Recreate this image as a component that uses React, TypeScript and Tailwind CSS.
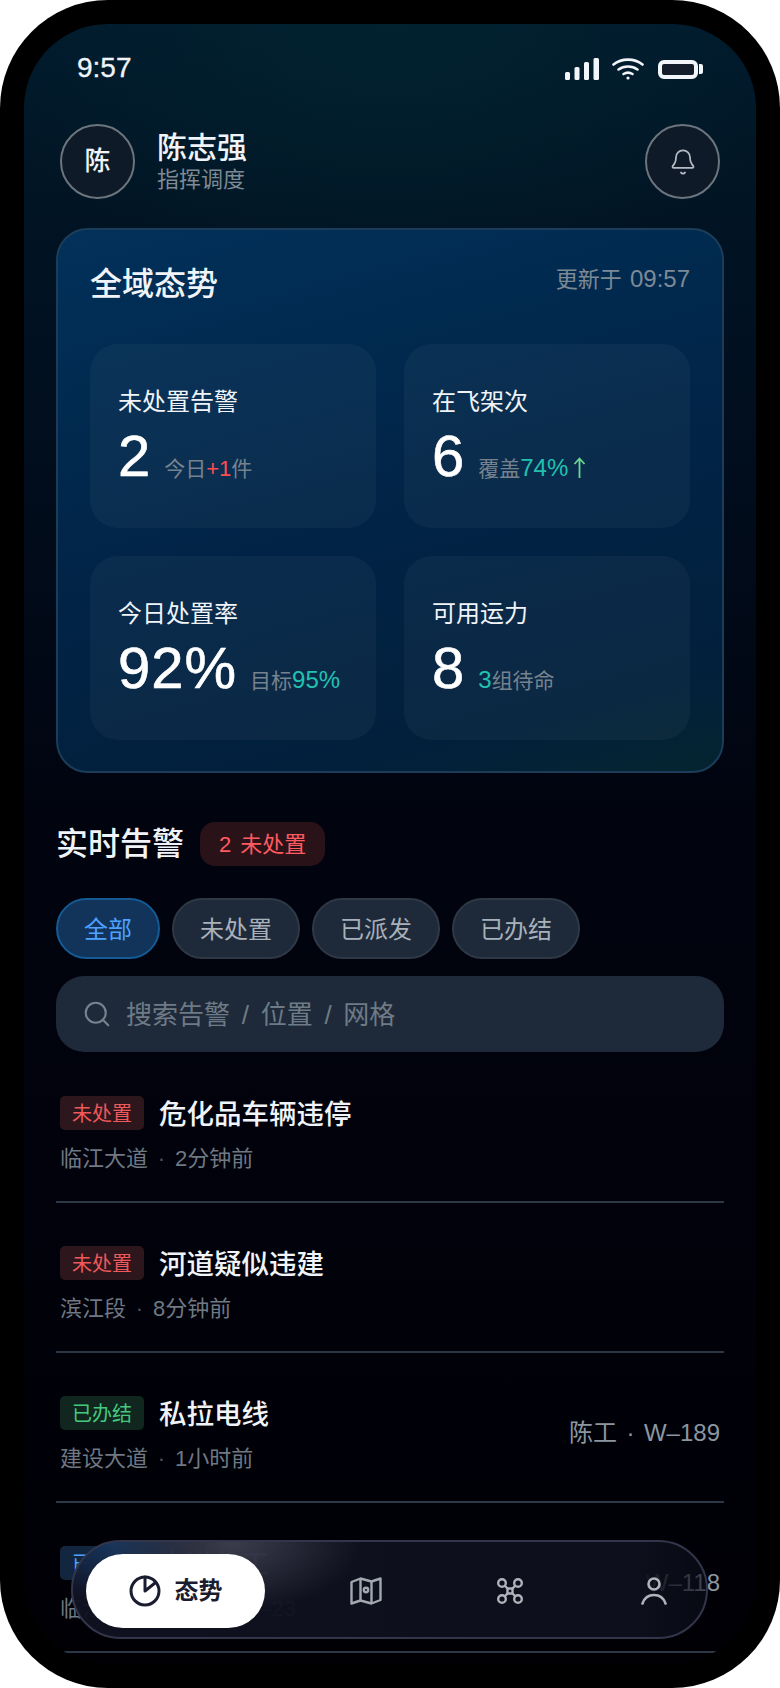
import { Bell, Search } from 'lucide-react';

const stats = [
  { label: '未处置告警', value: '2', sub: <>今日<b className="text-[22px] font-medium text-[#ff4d4f]">+1</b>件</> },
  {
    label: '在飞架次',
    value: '6',
    sub: (
      <>
        覆盖<b className="text-[24px] font-medium text-[#22c1b0]">74%</b>
        <svg className="ml-[5px] inline-block align-[-2px]" width="13" height="21" viewBox="0 0 13 21" fill="none" stroke="#6ad88f" strokeWidth="1.8">
          <path d="M6.5 21V1.5M1.5 7L6.5 1.5L11.5 7" />
        </svg>
      </>
    ),
  },
  { label: '今日处置率', value: '92%', sub: <>目标<b className="text-[24px] font-medium text-[#22c1b0]">95%</b></> },
  { label: '可用运力', value: '8', sub: <><b className="text-[24px] font-medium text-[#22c1b0]">3</b>组待命</> },
];

const filters = ['全部', '未处置', '已派发', '已办结'];

const alerts = [
  { tag: '未处置', tagClass: 'bg-[#2d171d] text-[#f0585a]', title: '危化品车辆违停', sub: '临江大道', time: '2分钟前', right: '' },
  { tag: '未处置', tagClass: 'bg-[#2d171d] text-[#f0585a]', title: '河道疑似违建', sub: '滨江段', time: '8分钟前', right: '' },
  { tag: '已办结', tagClass: 'bg-[#10261f] text-[#45c97f]', title: '私拉电线', sub: '建设大道', time: '1小时前', right: '陈工|W–189' },
  { tag: '已派发', tagClass: 'bg-[#12263f] text-[#4ea1ff]', title: '占道施工', sub: '临江北路', time: '网格 · W–23', right: '李工|W–118' },
];

function StatusIcons() {
  return (
    <div className="flex items-center">
      <svg width="34" height="22" viewBox="0 0 34 22" fill="#f2f5f9">
        <rect x="0" y="14" width="5" height="8" rx="1.5" />
        <rect x="9.5" y="9" width="5" height="13" rx="1.5" />
        <rect x="19" y="4" width="5" height="18" rx="1.5" />
        <rect x="28.5" y="0" width="5.5" height="22" rx="1.5" />
      </svg>
      <svg className="ml-[13px]" width="32" height="22" viewBox="0 0 32 22" fill="none" stroke="#f2f5f9" strokeWidth="2.6" strokeLinecap="round">
        <path d="M1.5 6.5C9.5 0 22.5 0 30.5 6.5" />
        <path d="M6.5 11.5C12 7.5 20 7.5 25.5 11.5" />
        <path d="M11.5 16C14.5 14.2 17.5 14.2 20.5 16" />
        <circle cx="16" cy="20" r="1.6" fill="#f2f5f9" stroke="none" />
      </svg>
      <div className="ml-[14px] h-[19px] w-[40px] rounded-[6px] border-[4px] border-[#f2f5f9] bg-[#141d2b]" />
      <div className="ml-[1px] h-[10px] w-[4px] rounded-r-[2px] bg-[#f2f5f9]" />
    </div>
  );
}

function PieIcon() {
  return (
    <svg width="32" height="32" viewBox="0 0 32 32" fill="none" stroke="#1a1c30" strokeWidth="3" strokeLinecap="round" strokeLinejoin="round">
      <circle cx="16" cy="16" r="14" />
      <path d="M16 2V16L26 8" />
    </svg>
  );
}

function MapIcon() {
  return (
    <svg width="32" height="28" viewBox="0 0 32 28" fill="none" stroke="#a3a7ae" strokeWidth="2.4" strokeLinejoin="round">
      <path d="M1.5 5L10.5 1.5L21.5 4.5L30.5 1.5V23L21.5 26.5L10.5 23.5L1.5 26.5Z" />
      <path d="M10.5 1.5V23.5M21.5 4.5V26.5" />
      <circle cx="16" cy="13" r="2.2" />
    </svg>
  );
}

function DroneIcon() {
  return (
    <svg width="26" height="26" viewBox="0 0 26 26" fill="none" stroke="#b0b3b9" strokeWidth="2.4">
      <circle cx="5" cy="5" r="3.8" />
      <circle cx="21" cy="5" r="3.8" />
      <circle cx="5" cy="21" r="3.8" />
      <circle cx="21" cy="21" r="3.8" />
      <path d="M8 8L10.5 10.5M18 8L15.5 10.5M8 18L10.5 15.5M18 18L15.5 15.5" />
      <rect x="10.5" y="10.5" width="5" height="5" rx="0.6" />
    </svg>
  );
}

function PersonIcon() {
  return (
    <svg width="26" height="28" viewBox="0 0 26 28" fill="none" stroke="#b0b3b9" strokeWidth="2.6" strokeLinecap="round">
      <circle cx="13" cy="7" r="5.5" />
      <path d="M1.5 26.5C3.5 20.5 8 18 13 18C18 18 22.5 20.5 24.5 26.5" />
    </svg>
  );
}

export default function App() {
  return (
    <div className="h-[1688px] w-[780px] rounded-[108px] bg-black p-[24px] font-['Liberation_Sans','Noto_Sans_CJK_SC',sans-serif]">
      <div className="relative h-full overflow-hidden rounded-[84px] bg-[radial-gradient(ellipse_60%_260px_at_50%_0%,#02222f,transparent),linear-gradient(180deg,#011a2d_0px,#011626_120px,#011222_260px,#010c1b_500px,#01040f_800px,#01020c_1100px,#000005_1640px)] px-[32px]">
        {/* Status bar */}
        <div className="flex h-[100px] items-start justify-between px-[21px] pt-[34px]">
          <span className="text-[28px] leading-[20px] text-[#f0f4f8] [-webkit-text-stroke:0.3px_#f0f4f8]">9:57</span>
          <StatusIcons />
        </div>

        {/* Header */}
        <div className="flex h-[75px] items-center justify-between px-[4px]">
          <div className="flex items-center gap-[22px]">
            <div className="flex h-[75px] w-[75px] items-center justify-center rounded-full border-2 border-[#6c757d] bg-[#0f1a28] text-[26px] font-medium text-[#f0f4f8]">
              陈
            </div>
            <div>
              <div className="text-[30px] leading-[36px] font-medium text-[#f0f4f8]">陈志强</div>
              <div className="text-[22px] leading-[28px] text-[#7f8a94]">指挥调度</div>
            </div>
          </div>
          <div className="flex h-[75px] w-[75px] items-center justify-center rounded-full border-2 border-[#6c757d] bg-[#0f1a28]">
            <Bell size={28} strokeWidth={1.5} className="text-[#b4bbc3]" />
          </div>
        </div>

        {/* Overview card */}
        <div className="mt-[29px] h-[545px] rounded-[32px] border-2 border-[#1b3d5a] bg-[linear-gradient(165deg,#02315a_0%,#012a50_25%,#012345_55%,#02203c_85%,#05242f_100%)] px-[32px] pt-[34px]">
          <div className="flex items-start justify-between">
            <h2 className="text-[32px] leading-[40px] font-medium text-[#f0f4f8]">全域态势</h2>
            <span className="text-[22px] leading-[30px] text-[#7d8a96] [word-spacing:2px]">
              更新于 <span className="text-[24px]">09:57</span>
            </span>
          </div>
          <div className="mt-[40px] grid grid-cols-2 gap-[28px]">
            {stats.map((s) => (
              <div key={s.label} className="h-[184px] rounded-[28px] bg-white/[0.035] px-[28px] pt-[43px]">
                <div className="text-[24px] leading-[30px] text-[#f0f4f8]">{s.label}</div>
                <div className="mt-[8px] flex items-baseline gap-[13px]">
                  <span className="text-[58px] leading-[62px] tracking-[1px] text-white [-webkit-text-stroke:0.6px_white]">{s.value}</span>
                  <span className="text-[21px] leading-[30px] text-[#76838f]">{s.sub}</span>
                </div>
              </div>
            ))}
          </div>
        </div>

        {/* Alerts heading */}
        <div className="mt-[49px] flex h-[44px] items-center gap-[16px]">
          <h2 className="text-[32px] font-medium text-[#f0f4f8]">实时告警</h2>
          <span className="flex h-[44px] items-center rounded-[15px] bg-[#2a1219] px-[19px] text-[22px] text-[#ff5a5f] [word-spacing:3px]">
            2 未处置
          </span>
        </div>

        {/* Filters */}
        <div className="mt-[32px] flex gap-[12px]">
          {filters.map((f, i) => (
            <div
              key={f}
              className={
                i === 0
                  ? 'flex h-[61px] items-center rounded-full border-2 border-[#145a94] bg-[#12345a] px-[26px] pt-[2px] text-[24px] text-[#4ea1ff]'
                  : 'flex h-[61px] items-center rounded-full border-2 border-[#2f3946] bg-[#1e2a3a] px-[26px] pt-[2px] text-[24px] text-[#a8b0ba]'
              }
            >
              {f}
            </div>
          ))}
        </div>

        {/* Search */}
        <div className="mt-[17px] flex h-[76px] items-center gap-[14px] rounded-[28px] bg-[#1e2a3a] pl-[26px]">
          <Search size={30} strokeWidth={1.7} className="text-[#78828c]" />
          <span className="pt-[3px] text-[26px] whitespace-pre text-[#6e7a85] [word-spacing:4.5px]">搜索告警 / 位置 / 网格</span>
        </div>

        {/* Alert list */}
        <div className="mt-[1px]">
          {alerts.map((a) => {
            const [who, grid] = a.right.split('|');
            return (
              <div key={a.title} className="flex h-[150px] items-start justify-between border-b-2 border-[#2d3847] px-[4px] pt-[43px]">
                <div>
                  <div className="flex h-[34px] items-center gap-[15px]">
                    <span className={`flex h-[34px] w-[84px] items-center justify-center rounded-[5px] pt-[1px] text-[20px] ${a.tagClass}`}>{a.tag}</span>
                    <span className="pt-[3px] text-[27.5px] font-medium text-[#f0f4f8]">{a.title}</span>
                  </div>
                  <div className="mt-[14px] text-[22px] leading-[30px] text-[#6f7883]">
                    {a.sub}
                    <span className="inline-block w-[27px] text-center text-[#4d5661]">·</span>
                    {a.time}
                  </div>
                </div>
                {a.right && (
                  <div className="mt-[20px] text-[24px] leading-[34px] text-[#8c96a0]">
                    {who}
                    <span className="inline-block w-[27px] text-center">·</span>
                    {grid}
                  </div>
                )}
              </div>
            );
          })}
        </div>

        {/* Bottom nav */}
        <div className="absolute top-[1516px] left-[47px] flex h-[99px] w-[637px] items-center rounded-full border-2 border-[#33364a] bg-[radial-gradient(ellipse_130px_70px_at_25%_0%,rgba(74,76,92,0.75),transparent),radial-gradient(ellipse_90px_60px_at_6%_0%,rgba(24,62,108,0.8),transparent),linear-gradient(90deg,rgba(16,18,33,0.96)_0%,rgba(15,17,31,0.96)_36%,rgba(13,15,28,1)_62%,rgba(13,15,28,1)_89%,rgba(13,15,28,0.6)_100%)] pt-[3px] pl-[13px]">
          <div className="flex h-[74px] w-[179px] shrink-0 items-center justify-center gap-[14px] rounded-full bg-white text-[24px] font-bold text-[#1a1c30]">
            <PieIcon />
            态势
          </div>
          <div className="ml-[42px] flex h-[74px] w-[118px] shrink-0 items-center justify-center"><MapIcon /></div>
          <div className="ml-[26px] flex h-[74px] w-[118px] shrink-0 items-center justify-center"><DroneIcon /></div>
          <div className="ml-[26px] flex h-[74px] w-[118px] shrink-0 items-center justify-center"><PersonIcon /></div>
        </div>
      </div>
    </div>
  );
}
